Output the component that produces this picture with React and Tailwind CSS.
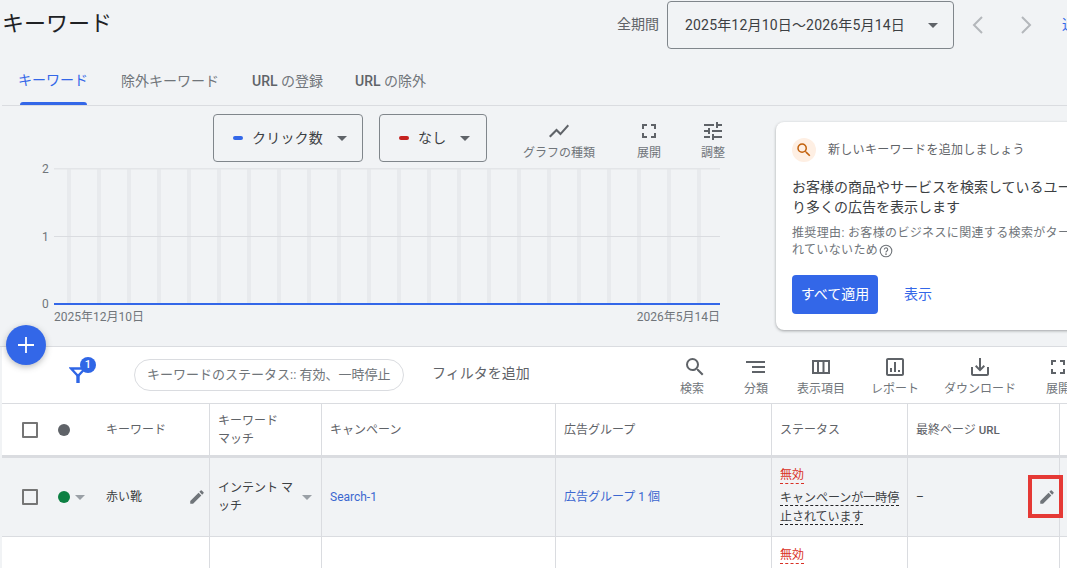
import React from "react";

const P = {
  search: "M15.5 14h-.79l-.28-.27A6.471 6.471 0 0 0 16 9.5 6.5 6.5 0 1 0 9.5 16c1.61 0 3.09-.59 4.23-1.57l.27.28v.79l5 4.99L20.49 19l-4.99-5zm-6 0C7.01 14 5 11.99 5 9.5S7.01 5 9.5 5 14 7.01 14 9.5 11.99 14 9.5 14z",
  edit: "M3 17.25V21h3.75L17.81 9.94l-3.75-3.75L3 17.25zM20.71 7.04a.996.996 0 0 0 0-1.41l-2.34-2.34a.996.996 0 0 0-1.41 0l-1.83 1.83 3.75 3.75 1.83-1.83z",
  chart: "M3.5 18.49l6-6.01 4 4L22 6.92l-1.41-1.41-7.09 7.97-4-4L2 16.99z",
  full: "M7 14H5v5h5v-2H7v-3zm-2-4h2V7h3V5H5v5zm12 7h-3v2h5v-5h-2v3zM14 5v2h3v3h2V5h-5z",
  tune: "M3 17v2h6v-2H3zM3 5v2h10V5H3zm10 16v-2h8v-2h-8v-2h-2v6h2zM7 9v2H3v2h4v2h2V9H7zm14 4v-2H11v2h10zm-6-4h2V7h4V5h-4V3h-2v6z",
  sort: "M21 18h-13v-2h13v2zM21 6v2H2V6h19zm0 7H8v-2h13v2z",
  cols: "M3 5v14h18V5H3zm5 12H5V7h3v10zm5.5 0h-3.5V7h3.5v10zm5.5 0h-3.5V7H19v10z",
  report: "M19 3H5c-1.1 0-2 .9-2 2v14c0 1.1.9 2 2 2h14c1.1 0 2-.9 2-2V5c0-1.1-.9-2-2-2zm0 16H5V5h14v14zM7 13h2v4H7zm4-6h2v10h-2zm4 8h2v2h-2z",
  down: "M19 12v7H5v-7H3v7c0 1.1.9 2 2 2h14c1.1 0 2-.9 2-2v-7h-2zm-6 .67l2.59-2.58L17 11.5l-5 5-5-5 1.41-1.41L11 12.67V3h2z",
};

const Icon = ({ d, className }) => (
  <svg viewBox="0 0 24 24" className={className} fill="currentColor"><path d={d} /></svg>
);

const Caret = ({ className }) => (
  <span className={`w-0 h-0 border-x-[5px] border-x-transparent border-t-[5px] ${className}`} />
);

const Tool = ({ d, label, className, iconClass = "" }) => (
  <div className={`flex flex-col items-center ${className}`}>
    <Icon d={d} className={`w-6 h-6 text-[#5f6368] ${iconClass}`} />
    <span className="text-[12px] leading-[16px] text-[#70757a] whitespace-nowrap mt-[2px]">{label}</span>
  </div>
);

const Select = ({ color, label, className }) => (
  <div className={`h-[48px] border border-[#80868b] rounded-[4px] flex items-center ${className}`}>
    <span className={`w-[10px] h-[4px] rounded-full ${color}`} />
    <span className="ml-[9px] text-[14px] tracking-[0.2px] text-[#3c4043] whitespace-nowrap">{label}</span>
    <Caret className="ml-auto border-t-[#5f6368]" />
  </div>
);

const bars = Array.from({ length: 22 }, (_, i) => 67 + i * 30);

const Chart = () => (
  <svg viewBox="0 0 730 170" className="w-[730px] h-[170px] block">
    {bars.map((x) => <rect key={x} x={x} y="7" width="4" height="134" fill="#e8eaed" />)}
    <rect x="54" y="6" width="666" height="1.5" fill="#e3e5e8" />
    <rect x="54" y="74" width="666" height="1" fill="#dadce0" />
    <rect x="54" y="141" width="666" height="2" fill="#3367e8" />
  </svg>
);

const Th = ({ children, className = "" }) => (
  <div className={`border-r border-[#dadce0] flex items-center text-[12px] leading-[18px] text-[#5f6368] ${className}`}>{children}</div>
);
const Td = ({ children, className = "" }) => (
  <div className={`border-r border-[#dadce0] flex text-[12px] leading-[18px] text-[#3c4043] ${className}`}>{children}</div>
);
const Box = () => <span className="w-4 h-4 border-2 border-[#757575] rounded-[1px] shrink-0" />;

const cols = "grid grid-cols-[208px_112px_234px_216px_136px_152px_1fr]";

export default function App() {
  return (
    <div className="relative w-[1067px] h-[568px] overflow-hidden antialiased bg-[#f1f3f5] font-['Roboto','Noto_Sans_CJK_JP',sans-serif]">
      {/* Header */}
      <div className="h-[49px] flex items-center">
        <h1 className="ml-[2px] text-[22px] leading-[28px] font-normal text-[#202124] -mt-[2px]">キーワード</h1>
        <span className="ml-[505px] text-[14px] text-[#5f6368] whitespace-nowrap">全期間</span>
        <div className="ml-[8px] mt-[1px] w-[287px] h-[48px] shrink-0 border border-[#80868b] rounded-[4px] flex items-center pl-[17px] pr-[15px]">
          <span className="text-[14px] tracking-[0.18px] text-[#3c4043] whitespace-nowrap">2025年12月10日～2026年5月14日</span>
          <Caret className="ml-auto border-t-[#5f6368]" />
        </div>
        <svg viewBox="0 0 12 20" className="ml-[18px] w-[12px] h-[20px] text-[#b4b7bb]" fill="none" stroke="currentColor" strokeWidth="2"><path d="M10 2L2 10l8 8" /></svg>
        <svg viewBox="0 0 12 20" className="ml-[36px] w-[12px] h-[20px] text-[#b4b7bb]" fill="none" stroke="currentColor" strokeWidth="2"><path d="M2 2l8 8-8 8" /></svg>
        <span className="ml-[30px] w-[5px] overflow-hidden text-[14px] text-[#3367e8] whitespace-nowrap">通</span>
      </div>

      {/* Tabs */}
      <div className="h-[57px] border-b border-[#dadce0] flex items-end ml-[2px] text-[14px]">
        <div className="ml-[16px] h-full w-[70px] flex flex-col items-center justify-end">
          <span className="text-[#3367e8] mb-[12px] leading-[20px] whitespace-nowrap">キーワード</span>
          <span className="w-[67px] h-[3px] bg-[#3367e8] rounded-t-[3px]" />
        </div>
        <span className="ml-[33px] mb-[14px] leading-[20px] text-[#70757a] whitespace-nowrap">除外キーワード</span>
        <span className="ml-[33px] mb-[14px] leading-[20px] text-[#70757a] whitespace-nowrap"><span className="font-medium text-[#5f6368]">URL</span> の登録</span>
        <span className="ml-[32px] mb-[14px] leading-[20px] text-[#70757a] whitespace-nowrap"><span className="font-medium text-[#5f6368]">URL</span> の除外</span>
      </div>

      {/* Chart section */}
      <div className="h-[241px] border-b border-[#dadce0] flex">
        <div className="w-[776px] shrink-0 pt-[8px] relative">
          <div className="flex items-start">
            <Select color="bg-[#3367e8]" label="クリック数" className="ml-[213px] w-[150px] pl-[19px] pr-[15px]" />
            <Select color="bg-[#c5221f]" label="なし" className="ml-[16px] w-[108px] pl-[19px] pr-[16px]" />
            <Tool d={P.chart} label="グラフの種類" className="ml-[35px] w-[74px] mt-[5px]" />
            <Tool d={P.full} label="展開" className="ml-[40px] w-[26px] mt-[5px]" />
            <Tool d={P.tune} label="調整" className="ml-[38px] w-[26px] mt-[5px]" />
          </div>
          <Chart />
          <span className="absolute left-[42px] top-[55px] text-[12px] leading-[16px] text-[#70757a]">2</span>
          <span className="absolute left-[42px] top-[123px] text-[12px] leading-[16px] text-[#70757a]">1</span>
          <span className="absolute left-[42px] top-[190px] text-[12px] leading-[16px] text-[#70757a]">0</span>
          <div className="absolute left-[54px] w-[666px] top-[203px] flex justify-between text-[12px] leading-[16px] text-[#70757a]">
            <span>2025年12月10日</span>
            <span>2026年5月14日</span>
          </div>
        </div>

        {/* Card */}
        <div className="w-[320px] shrink-0 h-[208px] mt-[16px] bg-white rounded-l-[8px] shadow-[0_1px_3px_rgba(60,64,67,0.45)] pl-[16px] pt-[16px]">
          <div className="flex items-center">
            <span className="w-6 h-6 rounded-full bg-[#feefe3] flex items-center justify-center">
              <Icon d={P.search} className="w-[18px] h-[18px] text-[#c2610c]" />
            </span>
            <span className="ml-[12px] text-[12px] tracking-[0.3px] text-[#5f6368] whitespace-nowrap">新しいキーワードを追加しましょう</span>
          </div>
          <p className="mt-[15px] text-[14px] leading-[20px] text-[#3c4043] whitespace-nowrap">お客様の商品やサービスを検索しているユーザーによ<br />り多くの広告を表示します</p>
          <p className="mt-[8px] text-[12px] tracking-[0.35px] leading-[17px] text-[#70757a] whitespace-nowrap">推奨理由: お客様のビジネスに関連する検索がターゲットに設定さ<br />
            <span className="inline-flex items-center">れていないため
              <svg viewBox="0 0 14 14" className="ml-[1px] w-[14px] h-[14px]" fill="none" stroke="currentColor" strokeWidth="1.1"><circle cx="7" cy="7" r="5.8" /><path d="M5.3 5.6a1.7 1.7 0 1 1 2.6 1.4c-.6.4-.9.7-.9 1.4" /><circle cx="7" cy="10.2" r=".3" /></svg>
            </span>
          </p>
          <div className="mt-[16px] flex items-center">
            <span className="w-[86px] h-[39px] bg-[#3367e8] rounded-[4px] flex items-center justify-center text-[14px] text-white whitespace-nowrap">すべて適用</span>
            <span className="ml-[26px] text-[14px] text-[#3367e8]">表示</span>
          </div>
        </div>
      </div>

      {/* Toolbar and table */}
      <div className="ml-[2px] bg-white">
        <div className="h-[57px] border-b border-[#dadce0] flex items-center relative">
          <svg viewBox="0 0 18 18" className="ml-[67px] w-[18px] h-[18px] text-[#2f66e6]" fill="none" stroke="currentColor" strokeWidth="2.4"><path d="M2 2.5h14L9 10z" strokeLinejoin="miter" /><path d="M9 9v8" strokeWidth="3.4" /></svg>
          <span className="absolute left-[78px] top-[10px] w-4 h-4 rounded-full bg-[#2f66e6] text-white text-[11px] leading-[16px] text-center font-medium">1</span>
          <div className="ml-[47px] w-[270px] h-[32px] border border-[#dadce0] rounded-full flex items-center pl-[12px] text-[13px] text-[#70757a] whitespace-nowrap overflow-hidden">
            キーワードのステータス:: 有効、一時停止
          </div>
          <span className="ml-[28px] mb-[3px] text-[14px] text-[#5f6368] whitespace-nowrap">フィルタを追加</span>
          <div className="absolute left-[678px] top-[8px] flex items-start">
            <Tool d={P.search} label="検索" className="w-[24px]" iconClass="translate-x-[3px]" />
            <Tool d={P.sort} label="分類" className="ml-[40px] w-[24px]" />
            <Tool d={P.cols} label="表示項目" className="ml-[28px] w-[50px]" />
            <Tool d={P.report} label="レポート" className="ml-[25px] w-[48px]" />
            <Tool d={P.down} label="ダウンロード" className="ml-[24px] w-[74px]" />
            <Tool d={P.full} label="展開" className="ml-[28px] w-[26px]" />
          </div>
        </div>

        <div className={`${cols} h-[54px] border-b-[3px] border-[#dadce0]`}>
          <Th className="pl-[20px]">
            <Box />
            <span className="ml-[20px] w-3 h-3 rounded-full bg-[#5f6368]" />
            <span className="ml-[36px]">キーワード</span>
          </Th>
          <Th className="px-2">キーワード<br />マッチ</Th>
          <Th className="px-2">キャンペーン</Th>
          <Th className="px-2">広告グループ</Th>
          <Th className="px-2">ステータス</Th>
          <Th className="px-2"><span>最終ページ <span className="font-medium text-[11.5px]">URL</span></span></Th>
          <div />
        </div>

        <div className={`${cols} h-[79px] border-b border-[#dadce0] bg-[#f1f3f5]`}>
          <Td className="pl-[20px] items-center">
            <Box />
            <span className="ml-[20px] w-3 h-3 rounded-full bg-[#0d8043]" />
            <Caret className="ml-[5px] border-t-[#9aa0a6]" />
            <span className="ml-[21px]">赤い靴</span>
            <Icon d={P.edit} className="ml-auto mr-[3px] w-[18px] h-[18px] text-[#70757a]" />
          </Td>
          <Td className="pl-2 pr-[9px] items-center">
            <span className="w-[76px]">インテント マッチ</span>
            <Caret className="ml-auto border-t-[#9aa0a6]" />
          </Td>
          <Td className="px-2 items-center"><span className="text-[#3b67d0]">Search-1</span></Td>
          <Td className="px-2 items-center"><span className="text-[#3b67d0]">広告グループ 1 個</span></Td>
          <Td className="px-2 items-center whitespace-nowrap">
            <div className="flex flex-col items-start">
              <span className="text-[#d93025] leading-[16px] border-b border-dashed border-[#d93025]">無効</span>
              <span className="mt-[5px] leading-[19px] tracking-[-0.03px]">
                <span className="border-b border-dashed border-[#202124]">キャンペーンが一時停</span><br />
                <span className="border-b border-dashed border-[#202124]">止されています</span>
              </span>
            </div>
          </Td>
          <Td className="px-2 items-center">–</Td>
          <div />
        </div>

        <div className={`${cols} h-[40px]`}>
          <Td /><Td /><Td /><Td />
          <Td className="px-2 items-start pt-[10px]">
            <span className="text-[#d93025] leading-[16px] border-b border-dashed border-[#d93025]">無効</span>
          </Td>
          <Td />
          <div />
        </div>
      </div>

      {/* Floating action button */}
      <div className="absolute left-[6px] top-[325px] w-10 h-10 rounded-full bg-[#3367e8] shadow-[0_2px_6px_rgba(60,64,67,0.35)] flex items-center justify-center">
        <svg viewBox="0 0 16 16" className="w-4 h-4 text-white" fill="none" stroke="currentColor" strokeWidth="1.8"><path d="M8 0v16M0 8h16" /></svg>
      </div>

      {/* Red highlight over the edit icon */}
      <div className="absolute left-[1028px] top-[475px] w-[35px] h-[43px] border-4 border-[#e53935] flex items-center justify-center pl-[3px]">
        <Icon d={P.edit} className="w-[18px] h-[18px] shrink-0 text-[#70757a]" />
      </div>
    </div>
  );
}
